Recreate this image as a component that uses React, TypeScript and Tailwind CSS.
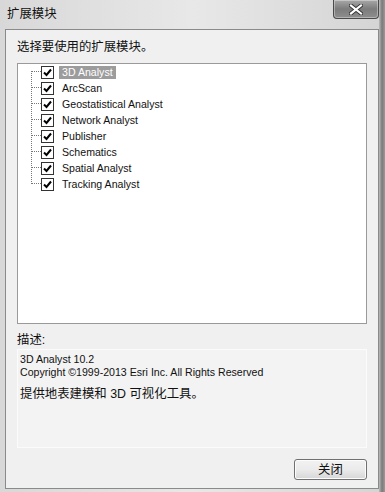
import React from "react";

const items = [
  "3D Analyst",
  "ArcScan",
  "Geostatistical Analyst",
  "Network Analyst",
  "Publisher",
  "Schematics",
  "Spatial Analyst",
  "Tracking Analyst",
];

function CheckBox() {
  return (
    <div className="w-[13px] h-[13px] border border-[#333] bg-white flex items-center justify-center shrink-0">
      <svg width="9" height="9" viewBox="0 0 9 9">
        <path d="M1 4.5 L3.5 7 L8 1.5" stroke="#000" strokeWidth="2" fill="none" />
      </svg>
    </div>
  );
}

export default function App() {
  const font = { fontFamily: '"Liberation Sans", "Noto Sans CJK SC", sans-serif' };
  return (
    <div
      className="w-[385px] h-[492px] relative bg-gradient-to-r from-[#d8d8d8] via-[#e8e8e8] to-[#d4d4d4] overflow-hidden"
      style={font}
    >
      {/* Title bar */}
      <div className="h-[29px] flex items-start pl-[7px] pt-[6px]">
        <span className="text-[12.4px] leading-[16px] text-[#111]">扩展模块</span>
      </div>
      <div className="absolute top-0 right-[6px] w-[46px] h-[19px] rounded-b-[4px] border border-[#4a4a4a] border-t-0 bg-gradient-to-b from-[#a8a8a8] via-[#7c7c7c] to-[#8e8e8e] flex items-center justify-center shadow-[inset_0_0_0_1px_rgba(255,255,255,0.35)]">
        <svg width="14" height="11" viewBox="0 0 14 11">
          <path d="M2 1.5 L12 9.5 M12 1.5 L2 9.5" stroke="#333" strokeWidth="4" strokeLinecap="square" />
          <path d="M2 1.5 L12 9.5 M12 1.5 L2 9.5" stroke="#fff" strokeWidth="2.2" strokeLinecap="square" />
        </svg>
      </div>
      <div className="absolute top-0 right-0 w-[6px] h-full bg-gradient-to-r from-[#bdbdbd] via-[#7a7a7a] to-[#9a9a9a]" />

      {/* Client area */}
      <div className="mx-[5px] w-[374px] h-[460px] border border-[#8a8a8a] bg-[#f0f0f0] px-[11px] flex flex-col">
        <div className="pt-[9px] h-[33px] text-[12.4px] leading-[16px] text-[#111]">选择要使用的扩展模块。</div>

        {/* Tree box */}
        <div className="relative w-[350px] h-[261px] border border-[#9a9a9a] bg-white">
          <svg className="absolute left-0 top-0" width="40" height="130">
            <line x1="13.5" y1="7" x2="13.5" y2="120" stroke="#777" strokeDasharray="1 1" />
            {items.map((_, i) => (
              <line key={i} x1="14" y1={7.5 + i * 16} x2="24" y2={7.5 + i * 16} stroke="#777" strokeDasharray="1 1" />
            ))}
          </svg>
          <div className="flex flex-col pl-[23px]">
            {items.map((t, i) => (
              <div key={t} className="h-[16px] flex items-center">
                <CheckBox />
                <span
                  className={
                    "ml-[5px] px-[3px] h-[13px] flex items-center text-[10.6px] leading-[13px] " +
                    (i === 0 ? "bg-[#9c9c9c] text-white" : "text-[#111]")
                  }
                >
                  {t}
                </span>
              </div>
            ))}
          </div>
        </div>

        <div className="mt-[8px] h-[17px] text-[12.4px] leading-[16px] text-[#111]">描述:</div>

        {/* Description box */}
        <div className="w-[350px] h-[99px] border border-[#fbfbfb] bg-[#f3f3f3] pl-[2px] pt-[3px] text-[#111]">
          <div className="text-[10.6px] leading-[13px]">3D Analyst 10.2</div>
          <div className="text-[10.6px] leading-[13px]">Copyright ©1999-2013 Esri Inc. All Rights Reserved</div>
          <div className="mt-[7px] text-[12.4px] leading-[16px]">提供地表建模和 3D 可视化工具。</div>
        </div>

        <div className="flex justify-end mt-[11px]">
          <button className="w-[73px] h-[21px] rounded-[3px] border border-[#707070] bg-gradient-to-b from-[#f2f2f2] via-[#ebebeb] to-[#d6d6d6] text-[12.4px] leading-[16px] text-[#111] shadow-[inset_0_0_0_1px_#fcfcfc]">
            关闭
          </button>
        </div>
      </div>
    </div>
  );
}
